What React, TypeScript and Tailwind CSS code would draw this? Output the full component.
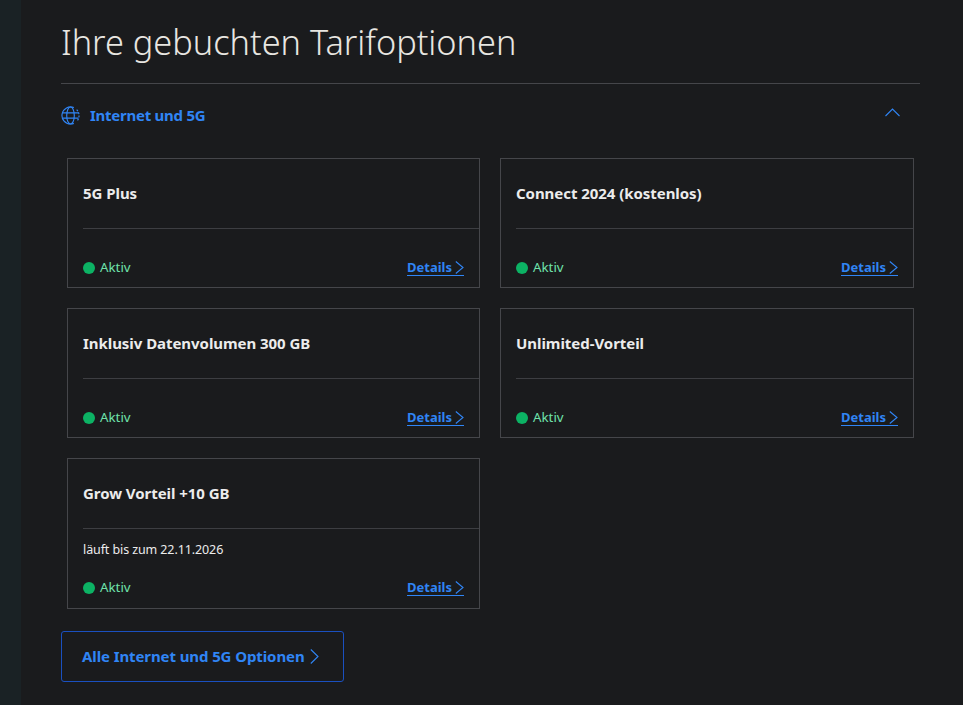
import React from "react";

const font = "font-['Noto_Sans',sans-serif]";

const options = [
  { title: "5G Plus" },
  { title: "Connect 2024 (kostenlos)" },
  { title: "Inklusiv Datenvolumen 300 GB" },
  { title: "Unlimited-Vorteil" },
  { title: "Grow Vorteil +10 GB", note: "läuft bis zum 22.11.2026" },
];

const GlobeIcon = () => (
  <svg width="19" height="19" viewBox="0 0 20 20" fill="none" stroke="#3085f5" strokeWidth="1.2">
    <path d="M13.5 1.7A9 9 0 1 0 10 19a9 9 0 0 0 3.5-.7" />
    <path d="M16.5 3.8A9 9 0 0 1 19 10a9 9 0 0 1-2.5 6.2" strokeDasharray="2 1.4" />
    <ellipse cx="10" cy="10" rx="4" ry="9" />
    <path d="M1.6 7.2h16.8M1.6 12.8h16.8" />
  </svg>
);

// thin chevron, the lucide ones are too small and round for this
const Chevron = ({ w, h }: { w: number; h: number }) => (
  <svg width={w} height={h} viewBox={`0 0 ${w} ${h}`} fill="none" stroke="#3085f5" strokeWidth="1.1">
    <path d={`M0.8 0.5L${w - 1} ${h / 2}L0.8 ${h - 0.5}`} />
  </svg>
);

const OptionCard = ({ title, note }: { title: string; note?: string }) => (
  <div className="border border-[#45464a] pl-[15px] flex flex-col">
    <div className="h-[70px] flex items-center border-b border-[#3d3e42]">
      <h3 className="text-[15px] font-bold text-[#ececec] -mt-[1px] tracking-[-0.05px]">{title}</h3>
    </div>
    {note && <p className="text-[12.5px] text-[#ececec] mt-[12px] -mb-[2px] leading-[17px] tracking-[-0.1px]">{note}</p>}
    <div className={`flex items-center justify-between pr-[15px] ${note ? "mt-[23px] mb-[11px]" : "mt-[30px] mb-[10px]"} h-[18px]`}>
      <div className="flex items-center gap-[5px]">
        <span className="w-3 h-3 rounded-full bg-[#0cb264]" />
        <span className="text-[13.3px] text-[#6fe3ab]">Aktiv</span>
      </div>
      <a className="flex items-center gap-[3px] text-[13px] font-bold text-[#3085f5] border-b border-[#3085f5] leading-[15px]">
        Details
        <Chevron w={9} h={13} />
      </a>
    </div>
  </div>
);

export default function App() {
  return (
    <div className={`${font} flex h-[705px] overflow-hidden bg-[#1a1b1d]`}>
      <div className="w-[21px] shrink-0 bg-[#1a2225]" />
      <main className="pl-10 w-[899px]">
        <h1 className="text-[34.3px] font-light leading-[50px] text-[#e8e6e1] mt-[17px] pb-[16px] border-b border-[#45464a]">
          Ihre gebuchten Tarifoptionen
        </h1>
        <div className="flex items-center justify-between h-[63px] pr-[20px]">
          <div className="flex items-center gap-[10px]">
            <GlobeIcon />
            <span className="text-[15px] font-bold text-[#3085f5] tracking-[-0.25px]">Internet und 5G</span>
          </div>
          <svg width="15" height="9" viewBox="0 0 15 9" fill="none" stroke="#3085f5" strokeWidth="1.1" className="-mt-[6px]">
            <path d="M0.5 8L7.5 1L14.5 8" />
          </svg>
        </div>
        <div className="grid grid-cols-[413px_414px] gap-x-5 gap-y-5 ml-[6px] mt-[11px]">
          {options.map((o) => (
            <OptionCard key={o.title} title={o.title} note={o.note} />
          ))}
        </div>
        <button className="mt-[22px] w-[283px] h-[51px] flex items-center pl-5 gap-[5px] border border-[#1a50c0] rounded-[3px] text-[15px] font-bold text-[#3085f5] tracking-[-0.1px]">
          Alle Internet und 5G Optionen
          <Chevron w={9} h={15} />
        </button>
      </main>
    </div>
  );
}
